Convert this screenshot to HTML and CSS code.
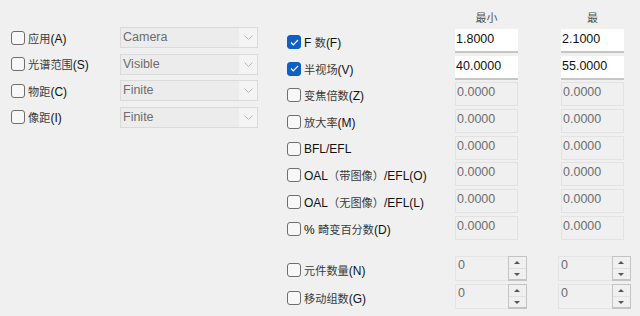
FILE: index.html
```html
<!DOCTYPE html>
<html lang="zh-CN">
<head>
    <meta charset="UTF-8">
    <title>系统参数</title>
    <link rel="stylesheet" href="styles.css">
</head>
<body>
    <div class="page">

        <!-- Left: selections -->
        <div class="left">
            <div class="lrow">
                <label class="chk"><span class="box"></span><span class="txt"><span class="cj">应用</span>(A)</span></label>
                <div class="combo"><span class="val">Camera</span><span class="arrow"><svg width="9" height="5" viewBox="0 0 9 5"><polyline points="0.5,0.5 4.5,4.5 8.5,0.5" fill="none" stroke="#b8b8b8" stroke-width="1"/></svg></span></div>
            </div>
            <div class="lrow">
                <label class="chk"><span class="box"></span><span class="txt"><span class="cj">光谱范围</span>(S)</span></label>
                <div class="combo"><span class="val">Visible</span><span class="arrow"><svg width="9" height="5" viewBox="0 0 9 5"><polyline points="0.5,0.5 4.5,4.5 8.5,0.5" fill="none" stroke="#b8b8b8" stroke-width="1"/></svg></span></div>
            </div>
            <div class="lrow">
                <label class="chk"><span class="box"></span><span class="txt"><span class="cj">物距</span>(C)</span></label>
                <div class="combo"><span class="val">Finite</span><span class="arrow"><svg width="9" height="5" viewBox="0 0 9 5"><polyline points="0.5,0.5 4.5,4.5 8.5,0.5" fill="none" stroke="#b8b8b8" stroke-width="1"/></svg></span></div>
            </div>
            <div class="lrow">
                <label class="chk"><span class="box"></span><span class="txt"><span class="cj">像距</span>(I)</span></label>
                <div class="combo"><span class="val">Finite</span><span class="arrow"><svg width="9" height="5" viewBox="0 0 9 5"><polyline points="0.5,0.5 4.5,4.5 8.5,0.5" fill="none" stroke="#b8b8b8" stroke-width="1"/></svg></span></div>
            </div>
        </div>

        <!-- Right: targets with min / max -->
        <div class="right">
            <div class="head">
                <span class="hcell">最小</span>
                <span class="hcell">最</span>
            </div>

            <div class="rrow">
                <label class="chk on"><span class="box"><svg width="9" height="7" viewBox="0 0 9 7"><polyline points="1,3.5 3.3,5.8 8,1" fill="none" stroke="#fff" stroke-width="1.2"/></svg></span><span class="txt">F <span class="cj">数</span>(F)</span></label>
                <div class="field">1.8000</div>
                <div class="field">2.1000</div>
            </div>
            <div class="rrow">
                <label class="chk on"><span class="box"><svg width="9" height="7" viewBox="0 0 9 7"><polyline points="1,3.5 3.3,5.8 8,1" fill="none" stroke="#fff" stroke-width="1.2"/></svg></span><span class="txt"><span class="cj">半视场</span>(V)</span></label>
                <div class="field">40.0000</div>
                <div class="field">55.0000</div>
            </div>
            <div class="rrow">
                <label class="chk"><span class="box"></span><span class="txt"><span class="cj">变焦倍数</span>(Z)</span></label>
                <div class="field off">0.0000</div>
                <div class="field off">0.0000</div>
            </div>
            <div class="rrow">
                <label class="chk"><span class="box"></span><span class="txt"><span class="cj">放大率</span>(M)</span></label>
                <div class="field off">0.0000</div>
                <div class="field off">0.0000</div>
            </div>
            <div class="rrow">
                <label class="chk"><span class="box"></span><span class="txt">BFL/EFL</span></label>
                <div class="field off">0.0000</div>
                <div class="field off">0.0000</div>
            </div>
            <div class="rrow">
                <label class="chk"><span class="box"></span><span class="txt">OAL<span class="cj">（带图像）</span>/EFL(O)</span></label>
                <div class="field off">0.0000</div>
                <div class="field off">0.0000</div>
            </div>
            <div class="rrow">
                <label class="chk"><span class="box"></span><span class="txt">OAL<span class="cj">（无图像）</span>/EFL(L)</span></label>
                <div class="field off">0.0000</div>
                <div class="field off">0.0000</div>
            </div>
            <div class="rrow">
                <label class="chk"><span class="box"></span><span class="txt">% <span class="cj">畸变百分数</span>(D)</span></label>
                <div class="field off">0.0000</div>
                <div class="field off">0.0000</div>
            </div>

            <div class="spins">
                <div class="srow">
                    <label class="chk"><span class="box"></span><span class="txt"><span class="cj">元件数量</span>(N)</span></label>
                    <div class="spin"><span class="sval">0</span><span class="btns"><span class="up"></span><span class="down"></span></span></div>
                    <div class="spin"><span class="sval">0</span><span class="btns"><span class="up"></span><span class="down"></span></span></div>
                </div>
                <div class="srow">
                    <label class="chk"><span class="box"></span><span class="txt"><span class="cj">移动组数</span>(G)</span></label>
                    <div class="spin"><span class="sval">0</span><span class="btns"><span class="up"></span><span class="down"></span></span></div>
                    <div class="spin"><span class="sval">0</span><span class="btns"><span class="up"></span><span class="down"></span></span></div>
                </div>
            </div>
        </div>

    </div>
</body>
</html>
```

FILE: styles.css
```css
body {
    margin: 0;
    background-color: #f0f0f0;
    font-family: "Liberation Sans", "Noto Sans CJK SC", sans-serif;
    font-size: 12px;
    color: #111;
}

.page {
    display: flex;
    width: 640px;
    height: 316px;
    padding-left: 11px;
    box-sizing: border-box;
}

/* Chinese part of a label: a bit smaller and lighter */
.cj {
    font-family: "Noto Sans CJK SC", sans-serif;
    font-size: 11.2px;
    color: #3a3a3a;
}

/* Checkbox + label */
.chk {
    display: flex;
    align-items: center;
    white-space: nowrap;
}

.chk .box {
    width: 12px;
    height: 12px;
    border: 1px solid #6e6e6e;
    border-radius: 3px;
    background-color: #f7f7f7;
    margin-right: 3px;
    display: flex;
    align-items: center;
    justify-content: center;
    flex: none;
}

.chk.on .box {
    background-color: #1060c4;
    border-color: #1060c4;
}

/* Left panel */
.left {
    width: 247px;
    padding-top: 27px;
    display: flex;
    flex-direction: column;
    gap: 5.6px;
}

.lrow {
    display: flex;
    align-items: center;
    height: 21px;
}

.lrow .chk {
    width: 109px;
}

.combo {
    width: 138px;
    height: 21px;
    border: 1px solid #dadada;
    box-sizing: border-box;
    display: flex;
    background-color: #f4f4f4;
}

.combo .val {
    flex: 1;
    background-color: #ececec;
    color: #6d6d6d;
    padding-left: 2px;
    line-height: 18px;
    font-size: 12.5px;
}

.combo .arrow {
    width: 18px;
    display: flex;
    align-items: center;
    justify-content: center;
}

/* Right panel */
.right {
    margin-left: 29px;
    padding-top: 8px;
    display: flex;
    flex-direction: column;
}

.head {
    display: flex;
    height: 21px;
    padding-left: 168px;
    gap: 43px;
}

.hcell {
    width: 63px;
    text-align: center;
    color: #555;
    font-family: "Noto Sans CJK SC", sans-serif;
    font-size: 11px;
    line-height: 18px;
}

.rrow {
    display: flex;
    align-items: center;
    height: 24px;
    margin-bottom: 2.7px;
    gap: 43px;
}

.rrow .chk {
    width: 168px;
    margin-right: -43px;
    padding-top: 2px;
}

.field {
    width: 63px;
    height: 24px;
    box-sizing: border-box;
    background-color: #fff;
    border-bottom: 2px solid #c6c6c6;
    padding: 3px 0 0 1px;
    color: #111;
    font-size: 12.5px;
}

.field.off {
    background-color: #f0f0f0;
    border: 1px solid #e2e2e2;
    color: #6d6d6d;
    padding: 2px 0 0 1px;
}

/* Spin rows */
.spins {
    margin-top: 13.5px;
    display: flex;
    flex-direction: column;
    gap: 3px;
}

.srow {
    display: flex;
    align-items: center;
    height: 25px;
}

.srow .chk {
    width: 168px;
    padding-top: 2px;
}

.spin {
    display: flex;
    width: 72px;
    height: 25px;
}

.spin + .spin {
    margin-left: 31px;
    width: 73px;
}

.sval {
    flex: 1;
    border: 1px solid #e4e4e4;
    border-right: none;
    color: #6d6d6d;
    padding: 1px 0 0 2px;
    font-size: 12.5px;
}

.btns {
    width: 17px;
    border: 1px solid #c4c4c4;
    border-bottom-width: 2px;
    display: flex;
    flex-direction: column;
}

.btns span {
    flex: 1;
    position: relative;
}

.btns .up {
    border-bottom: 1px solid #e0e0e0;
}

.btns .up::after,
.btns .down::after {
    content: "";
    position: absolute;
    left: 5px;
    top: 4px;
    border-left: 3.5px solid transparent;
    border-right: 3.5px solid transparent;
}

.btns .up::after {
    border-bottom: 3px solid #555;
}

.btns .down::after {
    border-top: 3px solid #555;
}
```
